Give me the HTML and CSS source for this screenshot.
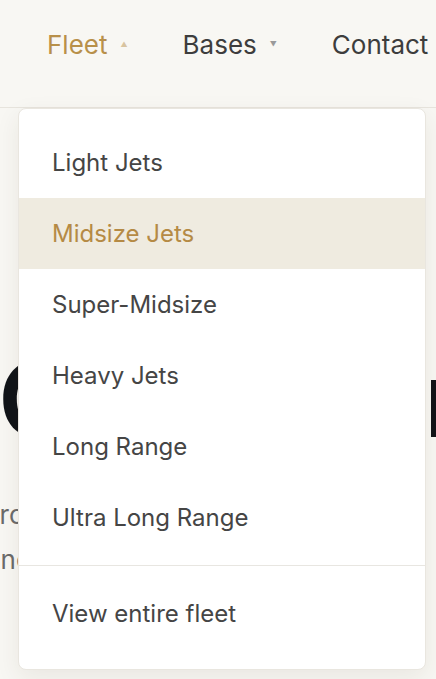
FILE: index.html
```html
<!DOCTYPE html>
<html lang="en">
<head>
    <meta charset="UTF-8">
    <meta name="viewport" content="width=device-width, initial-scale=1.0">
    <title>Private Jet Charter</title>
    <link rel="stylesheet" href="styles.css">
</head>
<body>
    <header class="site-header">
        <nav class="main-nav">
            <div class="nav-item open">
                <a href="#" class="nav-link active">Fleet <span class="caret">&#9650;</span></a>
                <div class="dropdown">
                    <ul class="dropdown-list">
                        <li><a href="#">Light Jets</a></li>
                        <li><a href="#" class="selected">Midsize Jets</a></li>
                        <li><a href="#">Super-Midsize</a></li>
                        <li><a href="#">Heavy Jets</a></li>
                        <li><a href="#">Long Range</a></li>
                        <li><a href="#">Ultra Long Range</a></li>
                    </ul>
                    <div class="dropdown-footer">
                        <a href="#">View entire fleet</a>
                    </div>
                </div>
            </div>
            <div class="nav-item">
                <a href="#" class="nav-link">Bases <span class="caret">&#9660;</span></a>
            </div>
            <div class="nav-item">
                <a href="#" class="nav-link">Contact</a>
            </div>
        </nav>
    </header>

    <main class="hero">
        <div class="hero-inner">
            <h1>Charter in style</h1>
            <p>From light jets to long range jets,<br>one call finds the right plane.</p>
        </div>
    </main>
</body>
</html>
```

FILE: styles.css
```css
html, body {
    height: 100%;
}
body {
    font-family: Inter, "Noto Sans", sans-serif;
    background-color: #f8f7f3;
    color: #3f3f3f;
    margin: 0;
}
a {
    color: inherit;
    text-decoration: none;
}
.site-header {
    position: relative;
    height: 107px;
    border-bottom: 1px solid #e7e4dd;
    display: flex;
    align-items: center;
    padding-left: 47px;
    z-index: 10;
}
.main-nav {
    display: flex;
    align-items: center;
    gap: 55px;
    margin-top: -18px;
}
.nav-link {
    font-size: 26px;
    color: #3d3d3d;
    white-space: nowrap;
    display: flex;
    align-items: center;
}
.nav-link.active {
    color: #b8904a;
}
.caret {
    font-size: 7px;
    margin-left: 13px;
    color: #9a9a9a;
}
.nav-link.active .caret {
    color: #d8c4a0;
}
.dropdown {
    position: absolute;
    top: 108px;
    left: 18px;
    width: 406px;
    background: #fff;
    border: 1px solid #e9e6df;
    border-radius: 8px;
    box-shadow: 0 8px 24px rgba(60, 50, 30, 0.08);
}
.dropdown-list {
    list-style: none;
    margin: 0;
    padding: 18px 0 12px;
}
.dropdown a {
    display: flex;
    align-items: center;
    height: 71px;
    padding-left: 33px;
    font-size: 24px;
    color: #454545;
}
.dropdown a.selected {
    background: #efebe0;
    color: #b58a45;
}
.dropdown-footer {
    border-top: 1px solid #e8e6e1;
    padding: 12px 0 20px;
}
.hero {
    display: flex;
    justify-content: center;
    padding-top: 239px;
    overflow: hidden;
}
.hero-inner {
    flex: none;
    width: 470px;
}
.hero h1 {
    font-size: 104px;
    font-weight: 600;
    color: #111418;
    letter-spacing: -1px;
    line-height: 1;
    margin: 0 0 41px;
    padding-left: 15px;
    white-space: nowrap;
}
.hero p {
    font-size: 26px;
    line-height: 45px;
    color: #6b6b6b;
    margin: 0;
    padding-left: 2px;
    white-space: nowrap;
}
```
